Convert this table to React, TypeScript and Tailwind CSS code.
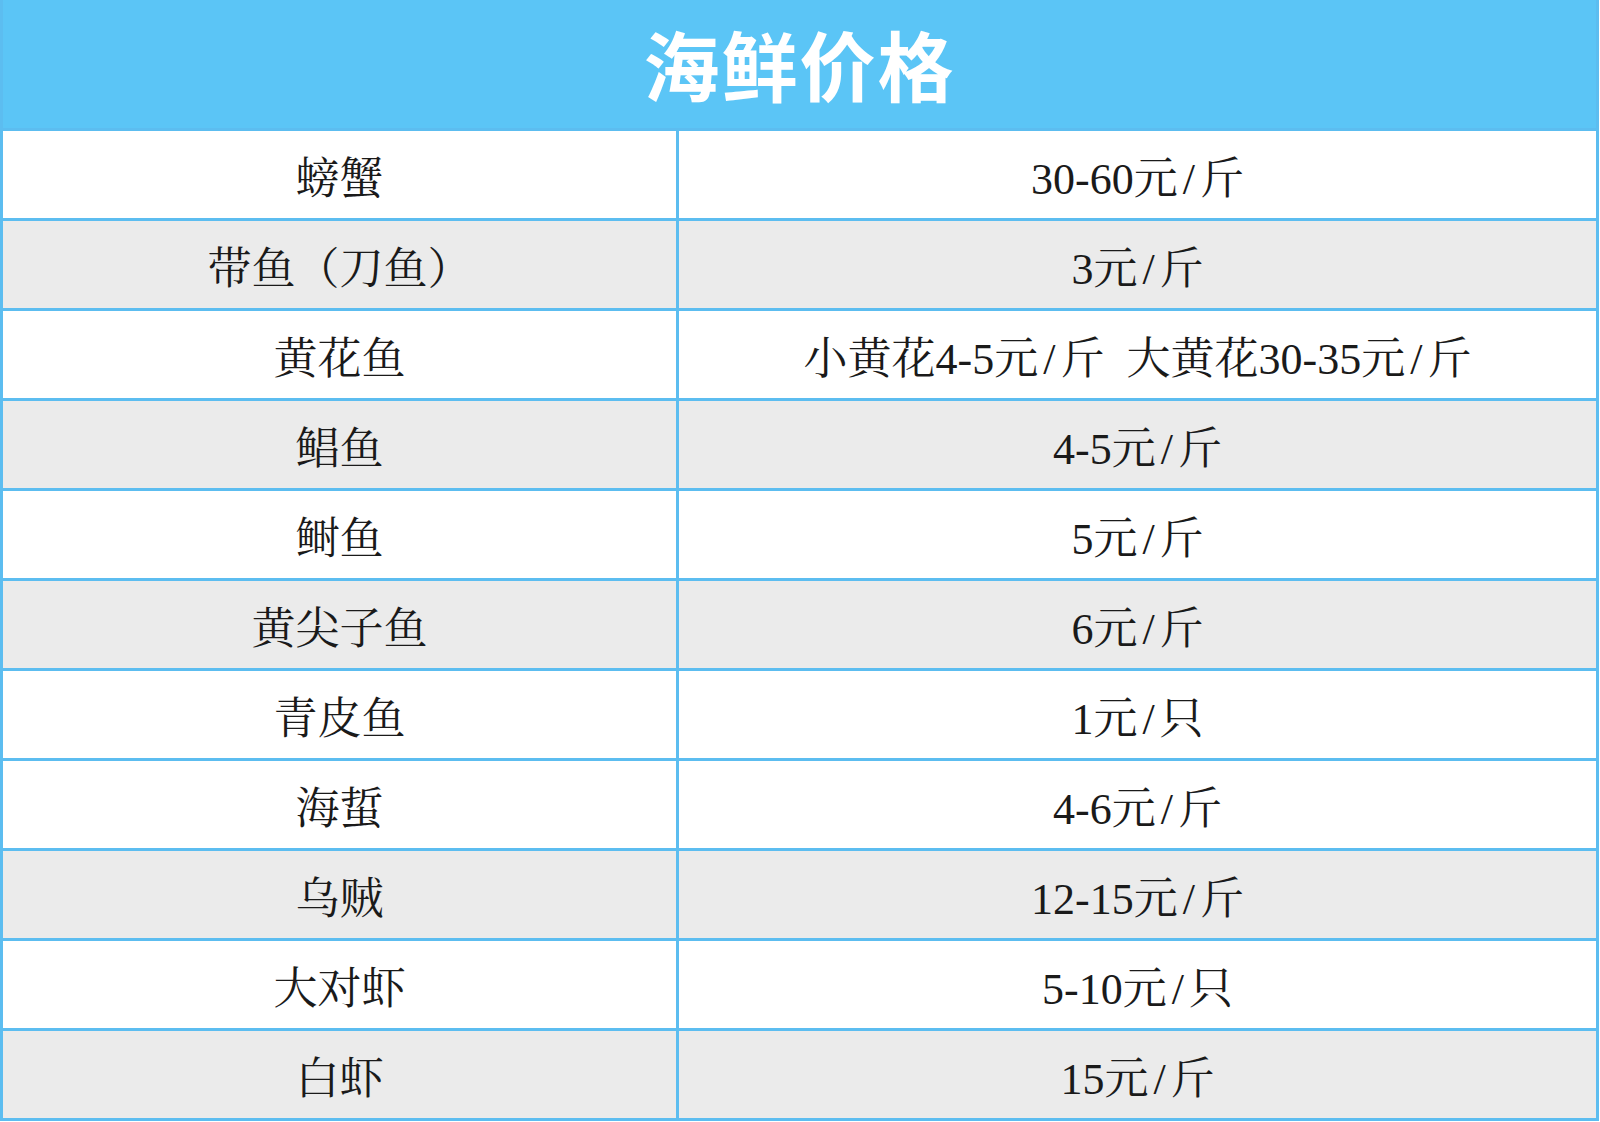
const rows: [string, string, boolean][] = [
  ['螃蟹', '30-60元/斤', false],
  ['带鱼（刀鱼）', '3元/斤', true],
  ['黄花鱼', '小黄花4-5元/斤  大黄花30-35元/斤', false],
  ['鲳鱼', '4-5元/斤', true],
  ['鲥鱼', '5元/斤', false],
  ['黄尖子鱼', '6元/斤', true],
  ['青皮鱼', '1元/只', false],
  ['海蜇', '4-6元/斤', false],
  ['乌贼', '12-15元/斤', true],
  ['大对虾', '5-10元/只', false],
  ['白虾', '15元/斤', true],
]

// split price on "/" so the slash gets a little room either side, like the print
function Price({ text }: { text: string }) {
  const parts = text.split('/')
  return (
    <>
      {parts.map((p, i) => (
        <span key={i} className="whitespace-pre">
          {p}
          {i < parts.length - 1 && <span className="px-[5px]">/</span>}
        </span>
      ))}
    </>
  )
}

export default function App() {
  return (
    <div className="w-[1600px] h-[1122px] bg-white">
      <div className="w-[1599px] border-x-[3px] border-b-[3px] border-[#5cbdf0] box-border">
        {/* Header */}
        <div className="h-[128px] bg-[#5bc5f6] flex items-center justify-center">
          <span
            className="text-white text-[76px] font-bold leading-none tracking-[2px] pb-[2px]"
            style={{ fontFamily: '"Noto Sans CJK SC", "Noto Sans", sans-serif' }}
          >
            海鲜价格
          </span>
        </div>

        {/* Rows */}
        {rows.map(([name, price, grey]) => (
          <div
            key={name}
            className={`grid grid-cols-[676px_1fr] h-[90px] border-t-[3px] border-[#5cbdf0] box-border ${
              grey ? 'bg-[#ebebeb]' : 'bg-white'
            }`}
            style={{ fontFamily: '"Liberation Serif", "Noto Serif CJK SC", "Noto Sans CJK SC", serif' }}
          >
            <div className="flex items-center justify-center border-r-[3px] border-[#5cbdf0] text-[44px] text-[#1a1a1a] pt-[10px]">
              {name}
            </div>
            <div className="flex items-center justify-center text-[44px] text-[#1a1a1a] pt-[10px]">
              <Price text={price} />
            </div>
          </div>
        ))}
      </div>
    </div>
  )
}
